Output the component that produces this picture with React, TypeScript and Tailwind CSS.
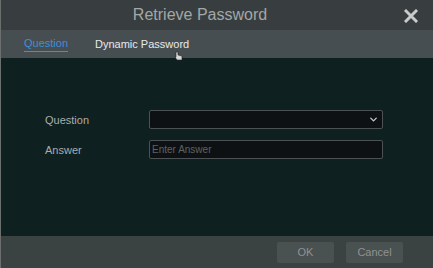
import { ChevronDown } from "lucide-react";

export default function App() {
  return (
    <div className="relative flex h-[268px] w-[433px] flex-col overflow-hidden bg-[#0f2020] font-['Liberation_Sans',Arial,sans-serif] border-l border-[#6b6f6e]">
      <div className="relative flex h-[30px] shrink-0 items-center justify-center bg-[#383e3f] pr-[34px]">
        <span className="text-[16px] text-[#a3a7a7]">Retrieve Password</span>
        <svg className="absolute right-[15px] top-[9px]" width="14" height="14" viewBox="0 0 14 14">
          <path d="M2 2L12 12M12 2L2 12" stroke="#c9cbcb" strokeWidth="3" strokeLinecap="square" />
        </svg>
      </div>
      <div className="flex h-[28px] shrink-0 items-center gap-[27px] bg-[#474e52] pl-[23px]">
        <span className="border-b border-[#3d8fd6] pb-[1px] text-[11px] leading-[13px] text-[#3d8fd6]">Question</span>
        <span className="text-[11px] text-[#e8eaea]">Dynamic Password</span>
      </div>
      <div className="flex flex-1 flex-col gap-[11px] pl-[44px] pt-[52px]">
        <div className="flex items-center">
          <span className="w-[104px] pt-[1px] text-[11px] text-[#a9adad]">Question</span>
          <div className="flex h-[19px] w-[234px] items-center justify-end rounded-[2px] border border-[#4c5253] bg-[#0d1113] pr-[3px]">
            <ChevronDown className="h-[11px] w-[11px] text-[#c6c9c9]" strokeWidth={3} />
          </div>
        </div>
        <div className="flex items-center">
          <span className="w-[104px] pt-[1px] text-[11px] text-[#a9adad]">Answer</span>
          <div className="flex h-[19px] w-[234px] items-center rounded-[2px] border border-[#4c5253] bg-[#0d1113] pl-[2px]">
            <span className="text-[10px] text-[#5d6262]">Enter Answer</span>
          </div>
        </div>
      </div>
      <div className="flex h-[32px] shrink-0 items-center justify-end gap-[12px] bg-[#3b4242] pr-[30px]">
        <div className="flex h-[21px] w-[57px] items-center justify-center rounded-[2px] bg-[#4a5151] text-[11px] text-[#8e9393]">OK</div>
        <div className="flex h-[21px] w-[57px] items-center justify-center rounded-[2px] bg-[#4a5151] text-[11px] text-[#8e9393]">Cancel</div>
      </div>
      <svg className="absolute left-[173px] top-[51px]" width="10" height="10" viewBox="0 0 10 10">
        <path d="M2 1L2 6L1 6L3 9L8 9L8 5L4 4L4 1Z" fill="#d8dada" stroke="#222" strokeWidth="0.6" />
      </svg>
    </div>
  );
}
